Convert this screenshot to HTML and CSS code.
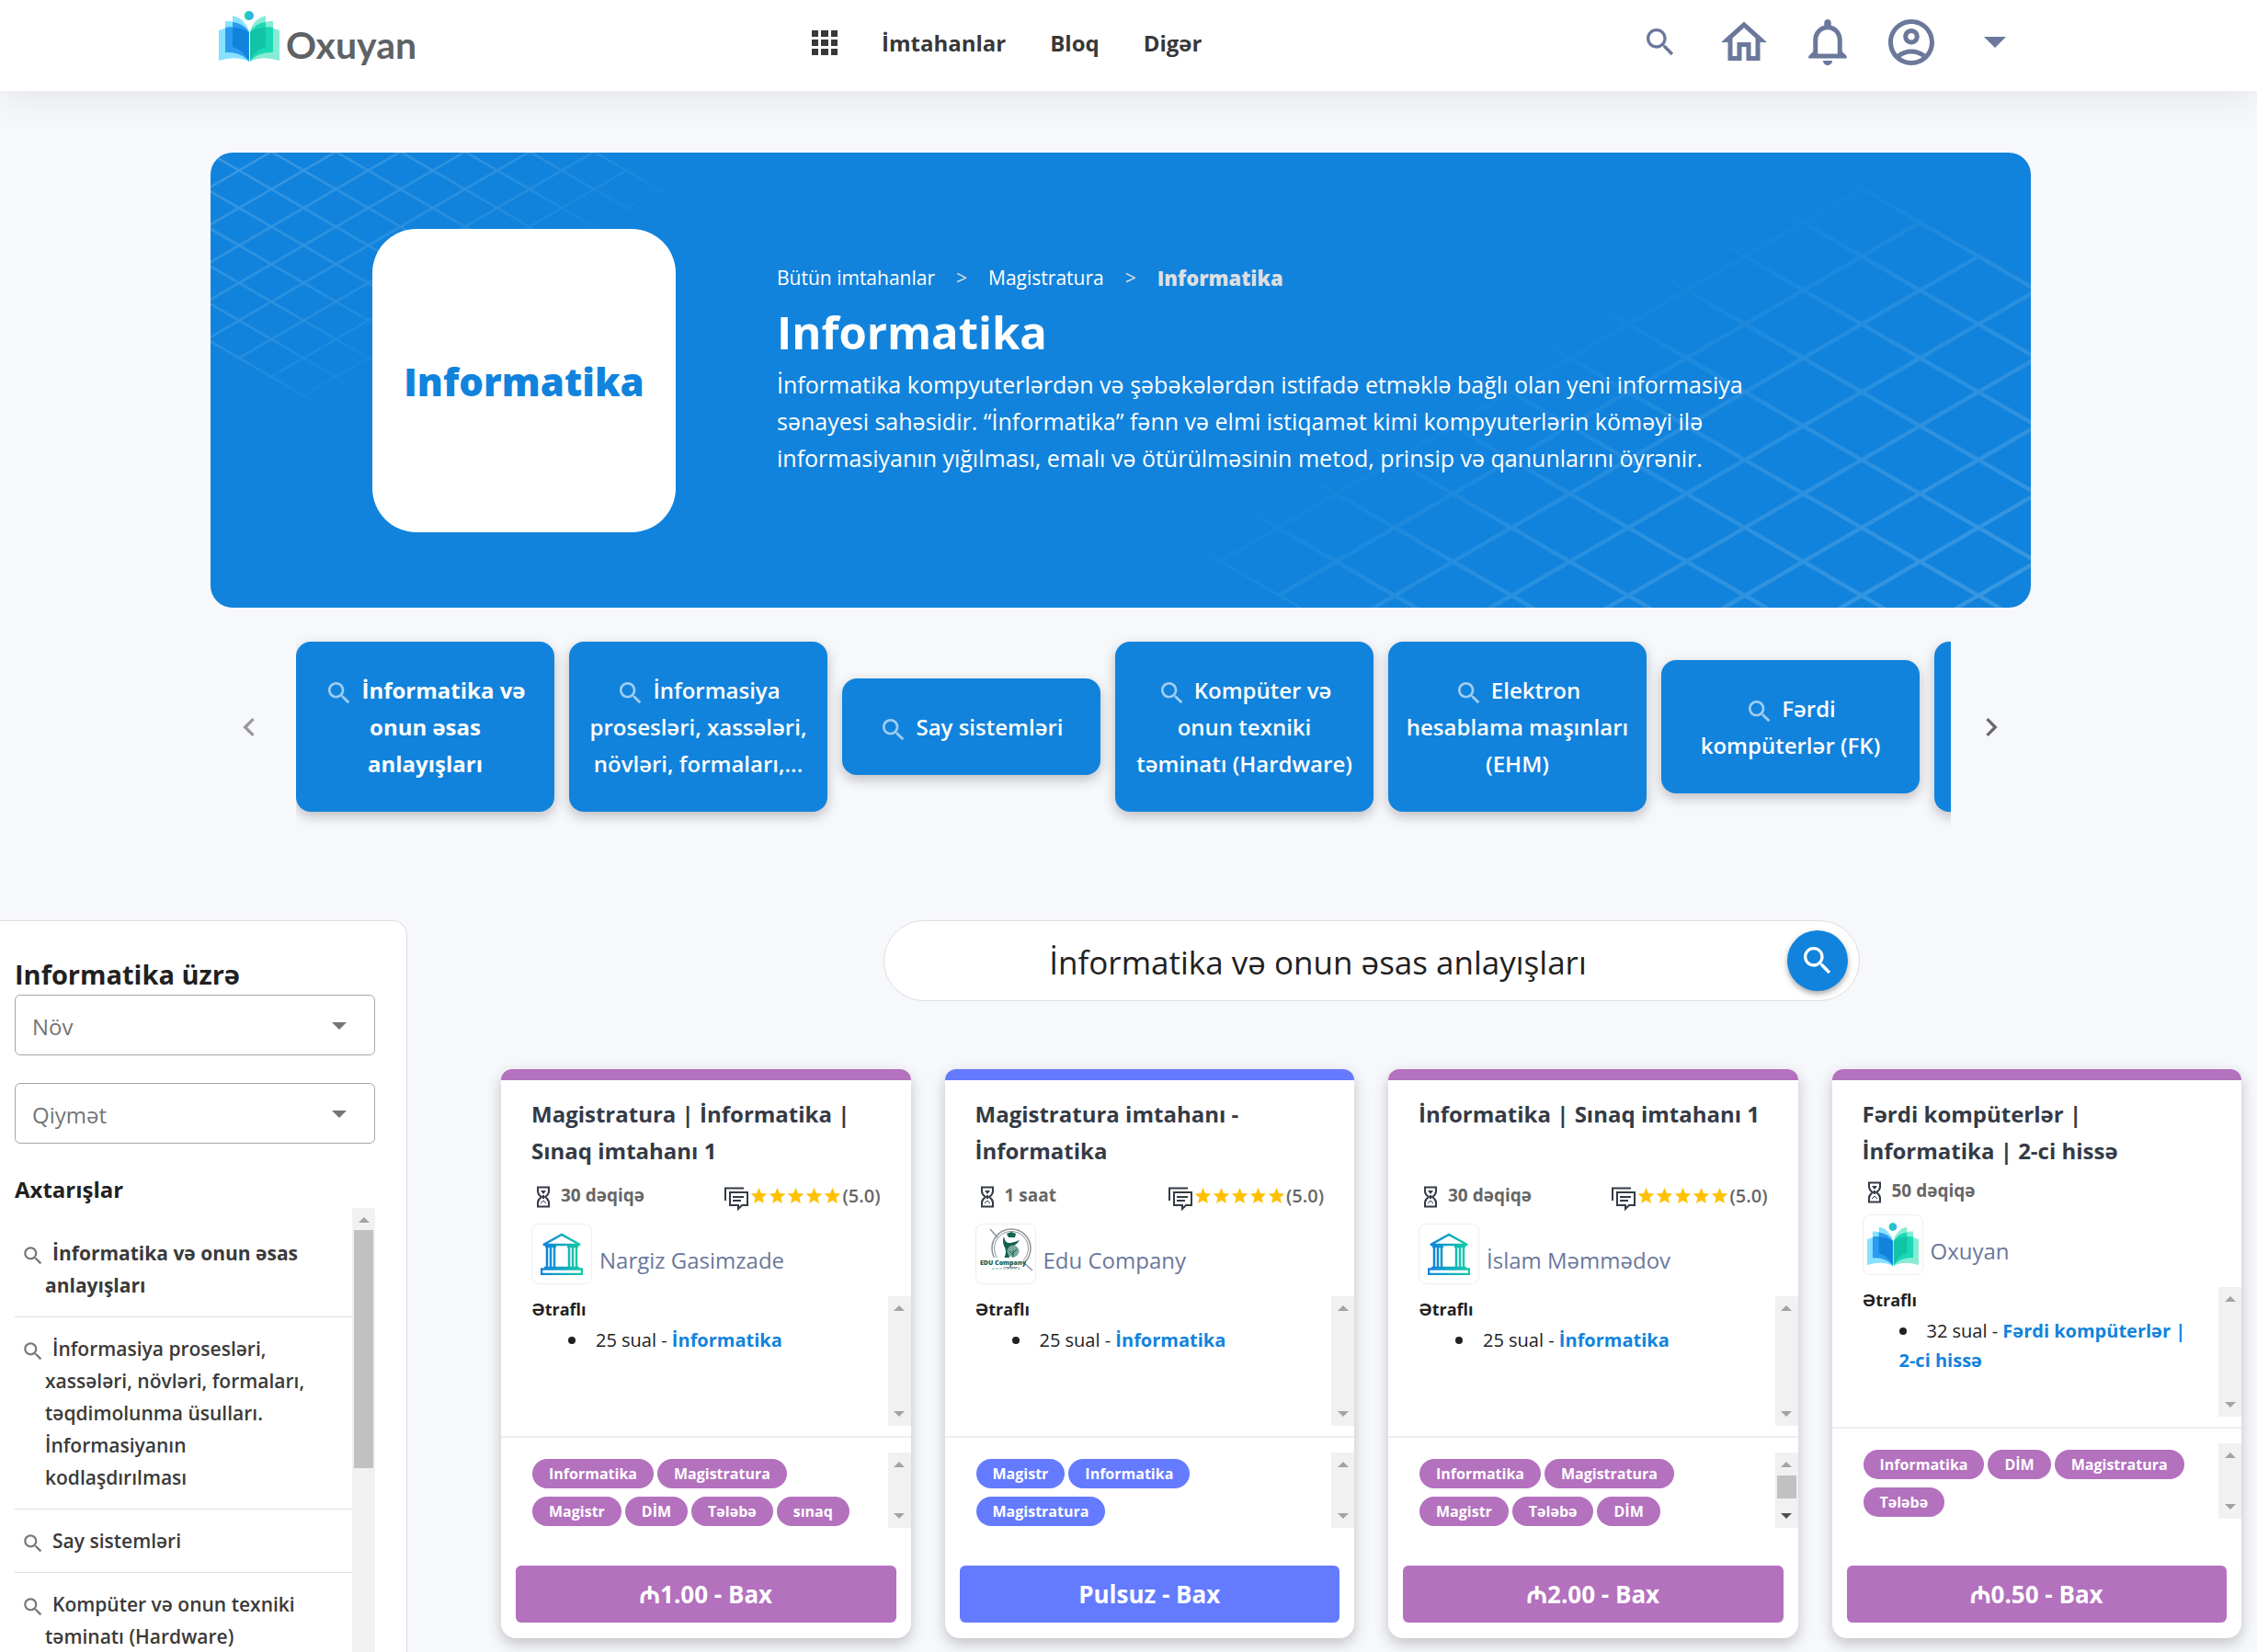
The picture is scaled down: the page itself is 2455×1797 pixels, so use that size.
FILE: index.html
```html
<!DOCTYPE html>
<html lang="az">
<head>
<meta charset="utf-8">
<meta name="viewport" content="width=device-width, initial-scale=1">
<title>Informatika - Oxuyan</title>
<link rel="stylesheet" href="styles.css">
</head>
<body>

<svg class="sprite" aria-hidden="true">
  <defs>
    <linearGradient id="grad-temple" x1="0" y1="0" x2="1" y2="0">
      <stop offset="0" stop-color="#1183dc"/><stop offset="1" stop-color="#13cba6"/>
    </linearGradient>
  </defs>
  <symbol id="i-search" viewBox="0 0 24 24"><path d="M15.5 14h-.79l-.28-.27C15.41 12.59 16 11.11 16 9.5 16 5.91 13.09 3 9.5 3S3 5.91 3 9.5 5.91 16 9.5 16c1.61 0 3.09-.59 4.23-1.57l.27.28v.79l5 4.99L20.49 19l-4.99-5zm-6 0C7.01 14 5 11.99 5 9.5S7.01 5 9.5 5 14 7.01 14 9.5 11.99 14 9.5 14z"/></symbol>
  <symbol id="i-caret" viewBox="0 0 24 12"><path d="M0 0h24L12 12z"/></symbol>
  <symbol id="i-left" viewBox="0 0 24 24"><path d="M15.41 7.41L14 6l-6 6 6 6 1.41-1.41L10.83 12z"/></symbol>
  <symbol id="i-right" viewBox="0 0 24 24"><path d="M10 6L8.59 7.41 13.17 12l-4.58 4.59L10 18l6-6z"/></symbol>
  <symbol id="i-book" viewBox="0 0 66 56">
    <g>
      <path fill="#86e2ff" d="M0 21Q17 14 33 24V55Q19 48 0 54z"/>
      <path fill="#86e2ff" d="M7 11Q21 10 33 22V55Q24 44 7 45z"/>
      <path fill="#86e2ff" d="M15 5Q28 8 33 22V50L15 39z"/>
      <path fill="#2b9bf0" d="M7 18Q10 17 15 17.500V12Q26 13 33 23V55Q24 44 7 45z"/>
      <path fill="#1183dc" d="M15 18Q25 18 32.500 23V54Q26 42 15 39z"/>
    </g>
    <g transform="matrix(-1 0 0 1 66 0)">
      <path fill="#86ecd4" d="M0 21Q17 14 32 24V55Q19 48 0 54z"/>
      <path fill="#86ecd4" d="M7 11Q21 10 32 22V55Q24 44 7 45z"/>
      <path fill="#86ecd4" d="M15 5Q28 8 32 22V50L15 39z"/>
      <path fill="#1bd9b5" d="M7 18Q10 17 15 17.500V12Q26 13 32 23V55Q24 44 7 45z"/>
      <path fill="#12c4a6" d="M15 18Q25 18 32 23V54Q26 42 15 39z"/>
    </g>
    <path fill="#fff" d="M26 9Q31 13 33 22Q35 13 40 9V0H26z"/>
    <ellipse cx="33" cy="5" rx="5" ry="5" fill="#35b0ee"/>
    <path fill="#1bd0b8" d="M33 0A5 5 0 0 0 33 10z"/>
  </symbol>
  <symbol id="i-hourglass" viewBox="0 0 16 24">
    <g fill="none" stroke="#343a46" stroke-width="2"><path d="M1 1.500h14M1 22.500h14M2 1v5q0 3 4 6-4 3-4 6v5M14 1v5q0 3-4 6 4 3 4 6v5"/><path d="M5 19l3-3 3 3" stroke-width="1"/></g>
    <path fill="#343a46" d="M5 5h6l-3 4zM7 10h2v4H7z"/>
  </symbol>
  <symbol id="i-comments" viewBox="0 0 26 26">
    <g fill="none" stroke="#343a46" stroke-width="2"><path d="M1 15V1.500h20"/><path d="M6 6h19v14h-6l-4 4v-4H6z"/><path d="M9 11h12M9 15h9"/></g>
  </symbol>
  <symbol id="i-star" viewBox="0 0 20 20"><path fill="#ffc107" d="M10 1l2.600 6.300 6.600.6-5 4.500 1.500 6.600L10 15.500 4.300 19l1.500-6.600-5-4.500 6.600-.6z"/></symbol>
  <symbol id="i-temple" viewBox="0 0 46 46">
    <g fill="none" stroke="url(#grad-temple)" stroke-width="2.500">
      <path d="M3 13L23 2l20 11z"/><path d="M1 39.500h44V45H1z"/><path d="M7 14v24M11 14v24M15 14v24M31 14v24M35 14v24M39 14v24"/>
      <path d="M5 15h12M29 15h12M4 38h38"/>
    </g>
  </symbol>
</svg>

<header class="topbar">
  <div class="container topbar-inner">
    <a class="brand" href="#"><svg class="brand-mark" aria-hidden="true"><use href="#i-book"/></svg><span>Oxuyan</span></a>
    <nav class="menu" aria-label="Əsas menyu">
      <button class="icon-btn apps" aria-label="Tətbiqlər"><svg width="28" height="27" viewBox="0 0 28 27"><path d="M0 0h7v7H0zM10 0h8v7h-8zM21 0h7v7h-7zM0 10h7v7H0zM10 10h8v7h-8zM21 10h7v7h-7zM0 20h7v7H0zM10 20h8v7h-8zM21 20h7v7h-7z"/></svg></button>
      <a href="#">İmtahanlar</a>
      <a href="#">Bloq</a>
      <a href="#">Digər</a>
    </nav>
    <div class="tools">
      <button class="icon-btn" aria-label="Axtar"><svg width="40" height="40"><use href="#i-search"/></svg></button>
      <button class="icon-btn" aria-label="Ana səhifə"><svg width="60" height="60" viewBox="0 0 24 24"><path d="M12 5.690l5 4.500V18h-2v-6H9v6H7v-7.810l5-4.500M12 3L2 12h3v8h6v-6h2v6h6v-8h3L12 3z"/></svg></button>
      <button class="icon-btn" aria-label="Bildirişlər"><svg width="60" height="60" viewBox="0 0 24 24"><path d="M12 22c1.100 0 2-.9 2-2h-4c0 1.100.9 2 2 2zm6.300-6v-5c0-3.070-1.930-5.640-4.800-6.320V3.500c0-.83-.67-1.500-1.500-1.500s-1.500.67-1.500 1.500v1.180C7.640 5.360 5.700 7.920 5.700 11v5l-2 2v1h16.600v-1l-2-2zm-2 1H7.700v-6c0-2.480 1.810-4.500 4.300-4.500s4.300 2.020 4.300 4.500v6z"/></svg></button>
      <button class="icon-btn" aria-label="Hesab"><svg width="60" height="60" viewBox="0 0 24 24"><path d="M12 2C6.480 2 2 6.480 2 12s4.480 10 10 10 10-4.480 10-10S17.520 2 12 2zM7.350 18.500C8.660 17.560 10.260 17 12 17s3.340.56 4.650 1.500c-1.310.94-2.910 1.500-4.650 1.500s-3.340-.56-4.650-1.500zm10.790-1.380C16.450 15.800 14.320 15 12 15s-4.450.8-6.140 2.120C4.700 15.730 4 13.950 4 12c0-4.420 3.580-8 8-8s8 3.580 8 8c0 1.950-.7 3.730-1.860 5.120z"/><path d="M12 6c-1.930 0-3.500 1.570-3.500 3.500S10.070 13 12 13s3.500-1.570 3.500-3.500S13.930 6 12 6zm0 5c-.83 0-1.500-.67-1.500-1.500S11.170 8 12 8s1.500.67 1.500 1.500S12.830 11 12 11z"/></svg></button>
      <button class="icon-btn caret" aria-label="Daha çox"><svg width="24" height="12"><use href="#i-caret"/></svg></button>
    </div>
  </div>
</header>

<section class="container hero">
  <svg class="hero-grid hero-grid-left" width="520" height="290" aria-hidden="true">
    <defs>
      <pattern id="grid-s" x="-4" y="-1" width="70.200" height="40.800" patternUnits="userSpaceOnUse"><path d="M0 0L70.200 40.800M70.200 0L0 40.800" stroke="#fff" stroke-width="2.500"/></pattern>
      <linearGradient id="fade-s" gradientUnits="userSpaceOnUse" x1="0" y1="0" x2="160" y2="270"><stop offset="0" stop-color="#fff"/><stop offset=".6" stop-color="#999"/><stop offset="1" stop-color="#000"/></linearGradient>
      <mask id="mask-s"><path fill="url(#fade-s)" d="M0 0H427L514 52L126 282L0 207z"/></mask>
    </defs>
    <path fill="url(#grid-s)" mask="url(#mask-s)" opacity=".18" d="M0 0H520V290H0z"/>
  </svg>
  <svg class="hero-grid hero-grid-right" width="960" height="495" aria-hidden="true">
    <defs>
      <pattern id="grid-l" x="14" y="39" width="127" height="73.800" patternUnits="userSpaceOnUse"><path d="M0 0L127 73.800M127 0L0 73.800" stroke="#fff" stroke-width="4.500"/></pattern>
      <linearGradient id="fade-l" gradientUnits="userSpaceOnUse" x1="185" y1="325" x2="448" y2="787"><stop offset="0" stop-color="#000"/><stop offset=".35" stop-color="#888"/><stop offset="1" stop-color="#fff"/></linearGradient>
      <mask id="mask-l"><path fill="url(#fade-l)" d="M732 10L960 143V495H163L26 416z"/></mask>
    </defs>
    <path fill="url(#grid-l)" mask="url(#mask-l)" opacity=".17" d="M0 0H960V495H0z"/>
  </svg>
  <div class="hero-logo">Informatika</div>
  <div class="hero-text">
    <nav class="crumbs" aria-label="Yol"><a href="#">Bütün imtahanlar</a><span>&gt;</span><a href="#">Magistratura</a><span>&gt;</span><b>Informatika</b></nav>
    <h1>Informatika</h1>
    <p>İnformatika kompyuterlərdən və şəbəkələrdən istifadə etməklə bağlı olan yeni informasiya sənayesi sahəsidir. “İnformatika” fənn və elmi istiqamət kimi kompyuterlərin köməyi ilə informasiyanın yığılması, emalı və ötürülməsinin metod, prinsip və qanunlarını öyrənir.</p>
  </div>
</section>

<section class="container carousel">
  <button class="icon-btn arrow prev" aria-label="Əvvəlki"><svg width="40" height="40"><use href="#i-left"/></svg></button>
  <div class="track">
    <button class="topic current"><svg><use href="#i-search"/></svg>İnformatika və onun əsas anlayışları</button>
    <button class="topic"><svg><use href="#i-search"/></svg>İnformasiya prosesləri, xassələri, növləri, formaları,...</button>
    <button class="topic"><svg><use href="#i-search"/></svg>Say sistemləri</button>
    <button class="topic"><svg><use href="#i-search"/></svg>Kompüter və onun texniki təminatı (Hardware)</button>
    <button class="topic"><svg><use href="#i-search"/></svg>Elektron hesablama maşınları (EHM)</button>
    <button class="topic"><svg><use href="#i-search"/></svg>Fərdi kompüterlər (FK)</button>
    <button class="topic"><svg><use href="#i-search"/></svg>Kompüterin proqram təminatı (Software)</button>
  </div>
  <button class="icon-btn arrow next" aria-label="Növbəti"><svg width="40" height="40"><use href="#i-right"/></svg></button>
</section>

<div class="layout">
  <aside class="sidebar">
    <h2>Informatika üzrə</h2>
    <div class="field"><select aria-label="Növ"><option>Növ</option></select><svg width="16" height="8"><use href="#i-caret"/></svg></div>
    <div class="field"><select aria-label="Qiymət"><option>Qiymət</option></select><svg width="16" height="8"><use href="#i-caret"/></svg></div>
    <h3>Axtarışlar</h3>
    <div class="searches">
      <ul>
        <li class="current"><svg><use href="#i-search"/></svg><a href="#">İnformatika və onun əsas anlayışları</a></li>
        <li><svg><use href="#i-search"/></svg><a href="#">İnformasiya prosesləri, xassələri, növləri, formaları, təqdimolunma üsulları. İnformasiyanın kodlaşdırılması</a></li>
        <li><svg><use href="#i-search"/></svg><a href="#">Say sistemləri</a></li>
        <li><svg><use href="#i-search"/></svg><a href="#">Kompüter və onun texniki təminatı (Hardware)</a></li>
      </ul>
      <div class="scrollbar long" aria-hidden="true"><i class="up"></i><i class="thumb"></i></div>
    </div>
  </aside>

  <main>
    <form class="search">
      <input type="text" aria-label="Axtarış" value="İnformatika və onun əsas anlayışları">
      <button type="button" aria-label="Axtar"><svg width="40" height="40"><use href="#i-search"/></svg></button>
    </form>

    <div class="cards">
      <article class="card">
        <h4>Magistratura | İnformatika | Sınaq imtahanı 1</h4>
        <div class="meta"><svg class="glass"><use href="#i-hourglass"/></svg><span>30 dəqiqə</span>
          <span class="rating"><svg class="comments"><use href="#i-comments"/></svg><svg><use href="#i-star"/></svg><svg><use href="#i-star"/></svg><svg><use href="#i-star"/></svg><svg><use href="#i-star"/></svg><svg><use href="#i-star"/></svg>(5.0)</span></div>
        <a class="owner" href="#"><span class="owner-logo"><svg width="46" height="46"><use href="#i-temple"/></svg></span><span>Nargiz Gasimzade</span></a>
        <div class="scroller details">
          <div><h5>Ətraflı</h5><ul><li>25 sual - <a href="#">İnformatika</a></li></ul></div>
          <div class="scrollbar" aria-hidden="true"><i class="up"></i><i class="down"></i></div>
        </div>
        <div class="scroller tags">
          <div class="tag-list"><span>Informatika</span><span>Magistratura</span><span>Magistr</span><span>DİM</span><span>Tələbə</span><span>sınaq</span></div>
          <div class="scrollbar" aria-hidden="true"><i class="up"></i><i class="down"></i></div>
        </div>
        <button class="buy">₼1.00 - Bax</button>
      </article>

      <article class="card free">
        <h4>Magistratura imtahanı - İnformatika</h4>
        <div class="meta"><svg class="glass"><use href="#i-hourglass"/></svg><span>1 saat</span>
          <span class="rating"><svg class="comments"><use href="#i-comments"/></svg><svg><use href="#i-star"/></svg><svg><use href="#i-star"/></svg><svg><use href="#i-star"/></svg><svg><use href="#i-star"/></svg><svg><use href="#i-star"/></svg>(5.0)</span></div>
        <a class="owner" href="#"><span class="owner-logo"><svg width="64" height="64" viewBox="1 1 64 64">
          <g fill="none" stroke="#8e9499"><ellipse cx="39" cy="27" rx="21" ry="21" stroke-width="1.500"/><ellipse cx="39" cy="27" rx="18.500" ry="18.500"/><path d="M16 6l8 9M52 42l10 9" stroke-width="1.500"/></g>
          <path fill="#15604f" d="M34 11l5-2 5 2-1 4h-7zM31 14q1 8 7 7 6-1 10-3-3 5-8 7-4 4-3 13h-6q4-8 0-14-2-5 0-10z"/>
          <circle cx="41" cy="30" r="6.500" fill="#7aa99d"/><path stroke="#15604f" fill="none" d="M41 38v-9m0 5l-4-4m4 2l4-4"/>
          <path fill="#fff" d="M3 37h49v10H3z"/>
          <text x="5" y="45" font-size="7" font-weight="800" fill="#15604f">EDU Company</text>
          <path stroke="#8aa" d="M18 49h32" stroke-dasharray="3 1"/>
        </svg></span><span>Edu Company</span></a>
        <div class="scroller details">
          <div><h5>Ətraflı</h5><ul><li>25 sual - <a href="#">İnformatika</a></li></ul></div>
          <div class="scrollbar" aria-hidden="true"><i class="up"></i><i class="down"></i></div>
        </div>
        <div class="scroller tags">
          <div class="tag-list"><span>Magistr</span><span>Informatika</span><span>Magistratura</span></div>
          <div class="scrollbar" aria-hidden="true"><i class="up"></i><i class="down"></i></div>
        </div>
        <button class="buy">Pulsuz - Bax</button>
      </article>

      <article class="card">
        <h4>İnformatika | Sınaq imtahanı 1</h4>
        <div class="meta"><svg class="glass"><use href="#i-hourglass"/></svg><span>30 dəqiqə</span>
          <span class="rating"><svg class="comments"><use href="#i-comments"/></svg><svg><use href="#i-star"/></svg><svg><use href="#i-star"/></svg><svg><use href="#i-star"/></svg><svg><use href="#i-star"/></svg><svg><use href="#i-star"/></svg>(5.0)</span></div>
        <a class="owner" href="#"><span class="owner-logo"><svg width="46" height="46"><use href="#i-temple"/></svg></span><span>İslam Məmmədov</span></a>
        <div class="scroller details">
          <div><h5>Ətraflı</h5><ul><li>25 sual - <a href="#">İnformatika</a></li></ul></div>
          <div class="scrollbar" aria-hidden="true"><i class="up"></i><i class="down"></i></div>
        </div>
        <div class="scroller tags">
          <div class="tag-list"><span>Informatika</span><span>Magistratura</span><span>Magistr</span><span>Tələbə</span><span>DİM</span></div>
          <div class="scrollbar active" aria-hidden="true"><i class="up"></i><i class="thumb"></i><i class="down"></i></div>
        </div>
        <button class="buy">₼2.00 - Bax</button>
      </article>

      <article class="card unrated">
        <h4>Fərdi kompüterlər | İnformatika | 2-ci hissə</h4>
        <div class="meta"><svg class="glass"><use href="#i-hourglass"/></svg><span>50 dəqiqə</span></div>
        <a class="owner" href="#"><span class="owner-logo"><svg width="56" height="48"><use href="#i-book"/></svg></span><span>Oxuyan</span></a>
        <div class="scroller details">
          <div><h5>Ətraflı</h5><ul><li>32 sual - <a href="#">Fərdi kompüterlər | 2-ci hissə</a></li></ul></div>
          <div class="scrollbar" aria-hidden="true"><i class="up"></i><i class="down"></i></div>
        </div>
        <div class="scroller tags">
          <div class="tag-list"><span>Informatika</span><span>DİM</span><span>Magistratura</span><span>Tələbə</span></div>
          <div class="scrollbar" aria-hidden="true"><i class="up"></i><i class="down"></i></div>
        </div>
        <button class="buy">₼0.50 - Bax</button>
      </article>
    </div>
  </main>
</div>
</body>
</html>
```

FILE: styles.css
```css
:root {
  --blue: #1183dc;
  --slate: #6b789b;
  --accent: #b371be;
  --gutter: 17px;
}

* { box-sizing: border-box; }

body {
  margin: 0;
  min-height: 100vh;
  display: flex;
  flex-direction: column;
  padding-right: var(--gutter);
  background: #f7f8fc;
  color: #212121;
  font-family: "Open Sans", "Noto Sans", "Segoe UI", sans-serif;
  font-size: 24px;
}

h1, h2, h3, h4, h5, p, ul { margin: 0; padding: 0; }
ul { list-style: none; }
a { color: inherit; text-decoration: none; }
svg { display: block; flex: none; fill: currentColor; }
button, input, select { font: inherit; color: inherit; border: 0; margin: 0; padding: 0; }
button { cursor: pointer; }
.sprite { position: absolute; width: 0; height: 0; }

.container {
  width: 1980px;
  max-width: 100%;
  margin-left: auto;
  margin-right: auto;
}
.icon-btn { background: none; display: flex; }

/* Top bar */
.topbar {
  margin-right: calc(-1 * var(--gutter));
  padding-right: var(--gutter);
  background: #fff;
  box-shadow: 0 8px 40px rgba(0, 0, 0, .08);
}
.topbar-inner {
  height: 99px;
  display: flex;
  align-items: center;
  padding: 0 27px 7px 9px;
}
.brand {
  flex: 0 0 645px;
  display: flex;
  align-items: center;
  gap: 7px;
  color: #5f6265;
  font: 700 41px/56px Lato, sans-serif;
}
.brand span { padding-top: 6px; }
.brand-mark { width: 66px; height: 56px; margin-top: -12px; }
.menu {
  display: flex;
  align-items: center;
  gap: 48px;
  color: #383838;
  font-weight: 700;
}
.tools {
  margin-left: auto;
  display: flex;
  align-items: center;
  gap: 31px;
  color: var(--slate);
}
.tools .icon-btn:first-child { margin-right: 10px; }
.tools .caret { margin-left: 18px; }

/* Hero */
.hero {
  position: relative;
  margin-top: 67px;
  display: flex;
  gap: 110px;
  padding: 83px 176px 82px;
  background: var(--blue);
  border-radius: 24px;
  color: #fff;
  overflow: hidden;
}
.hero-grid { position: absolute; top: 0; }
.hero-grid-left { left: 0; }
.hero-grid-right { right: 0; }
.hero-logo {
  position: relative;
  flex: none;
  width: 330px;
  height: 330px;
  display: flex;
  align-items: center;
  justify-content: center;
  background: #fff;
  border-radius: 48px;
  color: var(--blue);
  font-size: 42px;
  font-weight: 800;
}
.hero-text { position: relative; padding-top: 36px; max-width: 1080px; }
.crumbs {
  display: flex;
  gap: 23px;
  font-size: 21px;
  line-height: 34px;
}
.crumbs span { color: #dcdfe3; }
.crumbs b { color: #dcdfe3; font-size: 22px; font-weight: 800; }
.hero h1 { margin-top: 6px; font-size: 49px; line-height: 72px; }
.hero p { margin-top: 1px; font-size: 25px; line-height: 40px; }

/* Topic carousel */
.carousel {
  margin-top: 13px;
  margin-bottom: 94px;
  display: flex;
  align-items: center;
  padding: 0 22px;
}
.arrow { color: #6a6a6a; }
.prev { width: 71px; color: #999; }
.next { width: 65px; justify-content: center; padding-left: 22px; }
.track {
  flex: 1;
  min-width: 0;
  display: flex;
  align-items: center;
  gap: 16px;
  padding: 24px 0;
  overflow: hidden;
}
.topic {
  flex: none;
  width: 281px;
  padding: 33px 16px 32px;
  background: var(--blue);
  border-radius: 16px;
  color: #fff;
  font-weight: 600;
  line-height: 40px;
  box-shadow: 0 5px 14px rgba(0, 0, 0, .24);
}
.topic.current { font-weight: 700; }
.topic svg {
  display: inline-block;
  width: 32px;
  height: 32px;
  margin-right: 8px;
  vertical-align: -10px;
  opacity: .6;
}

/* Sidebar and results */
.layout { flex: 1; display: flex; }
.sidebar {
  flex: none;
  width: 443px;
  margin-right: 102px;
  display: flex;
  flex-direction: column;
  padding: 38px 34px 0 16px;
  background: #fff;
  border: 1px solid #dcdee4;
  border-width: 1px 1px 0 0;
  border-radius: 0 16px 0 0;
}
.sidebar h2 { font-size: 29px; line-height: 40px; padding-bottom: 2px; }
.sidebar h3 { font-size: 24px; line-height: 40px; }
.field { position: relative; margin-bottom: 30px; color: #757575; }
.field select {
  display: block;
  width: 100%;
  height: 66px;
  padding: 2px 18px 0;
  background: #fff;
  border: 1px solid #a6a6a6;
  border-radius: 6px;
  appearance: none;
}
.field svg { position: absolute; right: 31px; top: 30px; pointer-events: none; }
.searches { flex: 1 0 0; height: 0; display: flex; overflow: hidden; }
.searches ul { flex: 1; padding-top: 15px; }
.searches li {
  display: flex;
  padding: 17px 30px 16px 7px;
  border-bottom: 1px solid #dedede;
  color: #3a3a3a;
  font-size: 21px;
  font-weight: 600;
  line-height: 35px;
}
.searches li.current { font-weight: 700; }
.searches li svg { width: 26px; height: 26px; margin-top: 7px; color: #777; }
.searches li a { text-indent: 8px; }

.scrollbar {
  flex: none;
  width: 25px;
  display: flex;
  flex-direction: column;
  align-items: center;
  padding: 10px 0;
  background: #f1f1f1;
}
.scrollbar i { border: 6px solid transparent; border-top-width: 0; border-bottom-width: 0; }
.scrollbar .up { border-bottom: 6px solid #a3a3a3; }
.scrollbar .down { margin-top: auto; border-top: 6px solid #a3a3a3; }
.scrollbar .thumb { width: 21px; border: 0; background: #c1c1c1; }
.long .thumb { height: 259px; margin-top: 8px; }
.active .thumb { height: 25px; margin-top: 9px; }
.active .down { border-top-color: #505050; }

main { flex: 1; min-width: 0; }
.search {
  width: 1062px;
  max-width: 100%;
  height: 88px;
  margin: 0 auto 74px;
  display: flex;
  align-items: center;
  padding-right: 12px;
  background: #fff;
  border: 1px solid #dcdee0;
  border-radius: 44px;
}
.search input {
  flex: 1;
  min-width: 0;
  padding: 3px 38px 0 0;
  background: none;
  font-size: 35px;
  text-align: center;
}
.search button {
  width: 66px;
  height: 66px;
  display: flex;
  align-items: center;
  justify-content: center;
  background: var(--blue);
  border-radius: 50%;
  color: #fff;
  box-shadow: 0 3px 6px rgba(0, 0, 0, .35);
}

.cards { display: grid; grid-template-columns: repeat(4, 1fr); gap: 37px; }
.card {
  min-width: 0;
  height: 619px;
  display: flex;
  flex-direction: column;
  padding-bottom: 17px;
  background: #fff;
  border-top: 12px solid var(--accent);
  border-radius: 12px 12px 16px 16px;
  box-shadow: 0 6px 16px rgba(0, 0, 0, .22);
}
.free { --accent: #647bff; }
.card h4 {
  height: 80px;
  margin: 17px 33px 0;
  color: #343a46;
  font-size: 24px;
  line-height: 40px;
}
.meta {
  height: 32px;
  margin: 12px 33px 0;
  display: flex;
  align-items: center;
  color: #666;
  font-size: 19px;
  font-weight: 700;
}
.unrated .meta { margin-top: 7px; }
.glass { width: 16px; height: 24px; margin: 3px 11px 0 5px; }
.rating { margin-left: auto; display: flex; align-items: center; font-size: 20px; font-weight: 600; }
.rating svg { width: 19px; height: 19px; }
.rating svg + svg { margin-right: 1px; }
.rating .comments { width: 26px; height: 26px; margin: 8px 2px 0 0; }
.owner {
  margin: 15px 33px 13px;
  display: flex;
  align-items: flex-end;
  gap: 8px;
  color: var(--slate);
  font-weight: 500;
  line-height: 52px;
}
.unrated .owner { margin-top: 10px; }
.owner-logo {
  width: 66px;
  height: 66px;
  display: flex;
  align-items: center;
  justify-content: center;
  border: 1px solid #eee;
  border-radius: 8px;
}
.scroller { display: flex; }
.scroller > :first-child { flex: 1; min-width: 0; padding: 0 33px; }
.details { height: 141px; font-size: 20px; line-height: 32px; }
.details h5 { font-size: 18px; line-height: 28px; padding-bottom: 4px; }
.details li { padding-left: 40px; }
.details li::before {
  content: "";
  display: inline-block;
  width: 8px;
  height: 8px;
  margin-right: 22px;
  border-radius: 50%;
  background: #212121;
  vertical-align: 3px;
}
.details a { color: var(--blue); font-weight: 700; }
.tags { height: 100px; margin-top: 11px; padding-top: 16px; border-top: 2px solid #eee; }
.tag-list { display: flex; flex-wrap: wrap; align-content: flex-start; gap: 9px 4px; }
.scroller > .tag-list { padding: 7px 33px 0 34px; }
.tag-list span {
  padding: 0 18px;
  background: var(--accent);
  border-radius: 16px;
  color: #fff;
  font-size: 16px;
  font-weight: 700;
  line-height: 32px;
}
.buy {
  height: 62px;
  margin: auto 16px 0;
  background: var(--accent);
  border-radius: 6px;
  color: #fff;
  font-size: 26px;
  font-weight: 700;
}
```
